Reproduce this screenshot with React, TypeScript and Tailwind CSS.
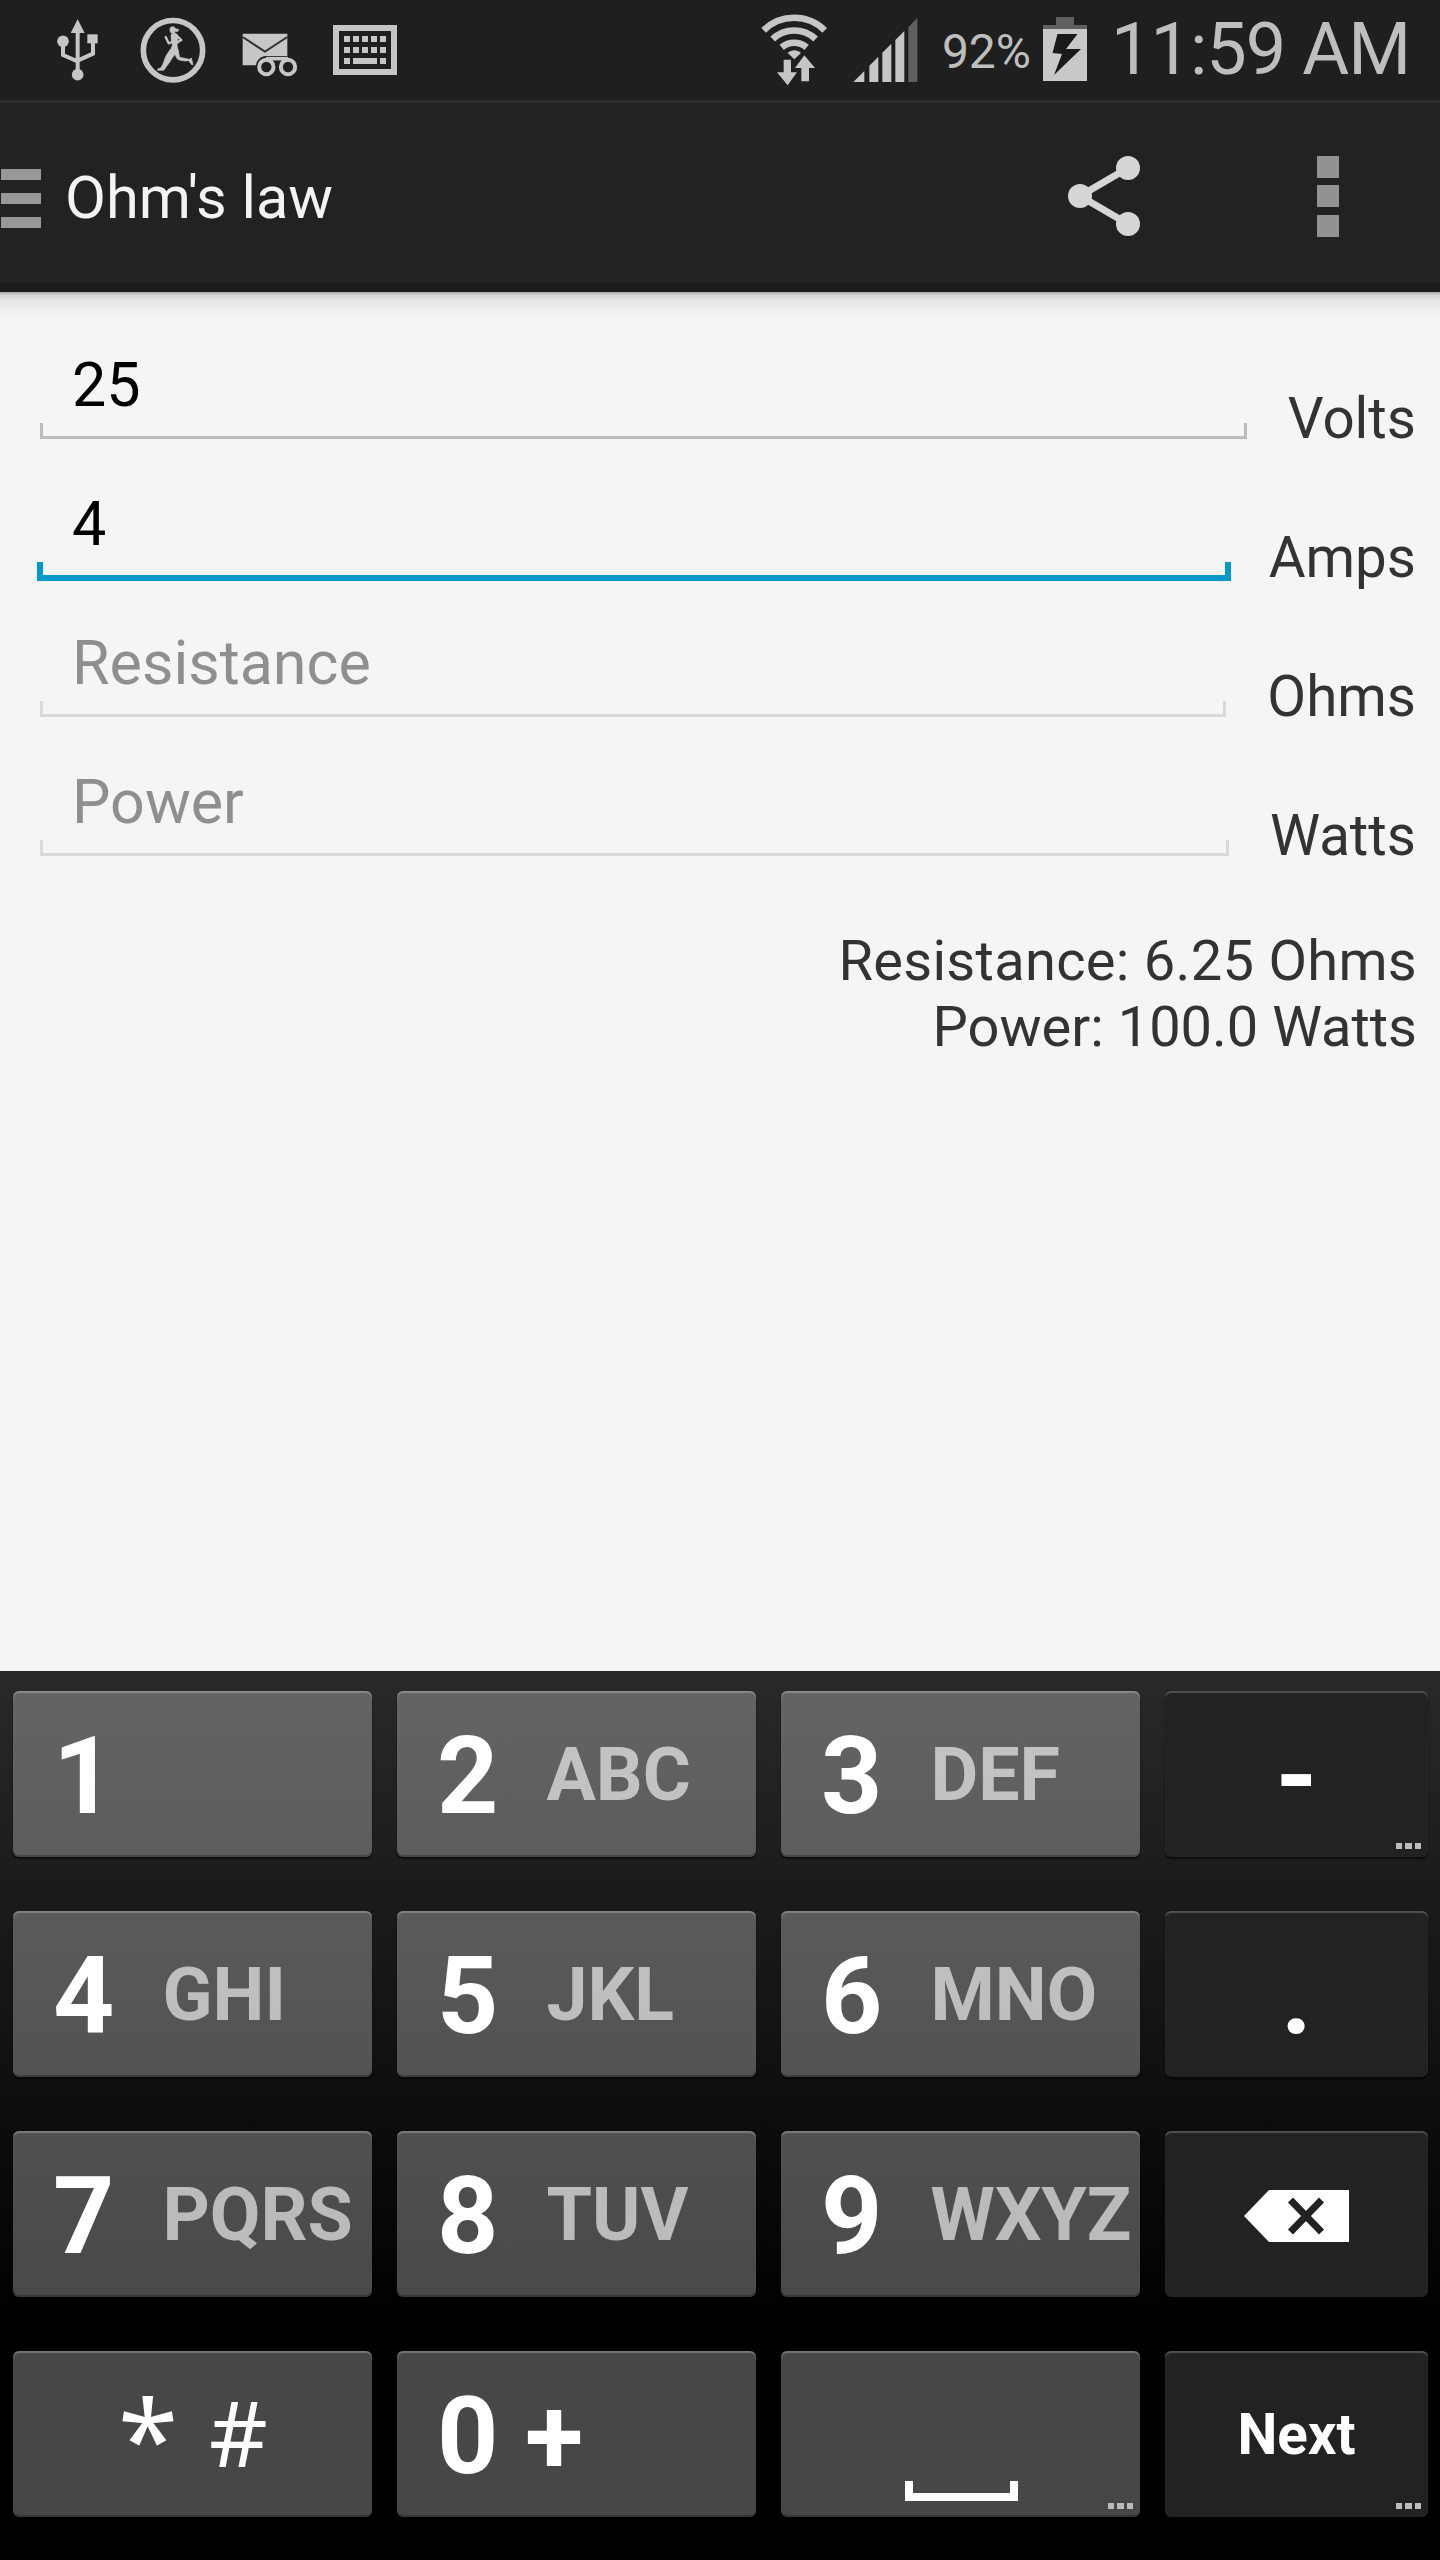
import { ReactNode } from "react";

type Field = {
  unit: string;
  value?: string;
  hint: string;
  focused?: boolean;
};

const FIELDS: Field[] = [
  { unit: "Volts", value: "25", hint: "Voltage" },
  { unit: "Amps", value: "4", hint: "Current", focused: true },
  { unit: "Ohms", hint: "Resistance" },
  { unit: "Watts", hint: "Power" },
];

function UsbIcon() {
  return (
    <svg className="w-[41px] h-[62px] shrink-0" viewBox="170 59 123 186" fill="#c6c6c6">
      <path d="M232 60l21 41h-42z" />
      <path d="M232 95v130M188 126v41l44 19M278 126v37l-46 21" fill="none" stroke="#c6c6c6" strokeWidth="12" />
      <circle cx="188" cy="126" r="17.500" />
      <circle cx="232" cy="226" r="17.500" />
      <path d="M261 105h31v27h-31z" />
    </svg>
  );
}

function RunnerIcon() {
  return (
    <svg className="w-[66px] h-[66px] shrink-0" viewBox="61 50 198 198" fill="#c6c6c6">
      <circle cx="160" cy="149.500" r="89" fill="none" stroke="#c6c6c6" strokeWidth="17" />
      <g stroke="#c6c6c6" strokeWidth="2" strokeLinejoin="round">
        <path d="M151 84c3-6 14-7 17 2l9 1-3 7-7-2c0 5-4 8-9 7-5 0-8-5-7-15z" />
        <path d="M155 102c5-4 14-4 18 1 3 12 1 24-1 32l4 18-8 8-10-3-5-8 5-16c-3-12-5-22-3-32z" />
        <path d="M152 147l18 6c-6 13-13 20-19 31l-16 22-3 4h-18l-1-3 11-5c7-10 10-25 16-37z" />
        <path d="M163 153l12-4c3 8 3 16 5 22l29 6 6-4 5 20h-4l-9-12c-12 2-23 0-33-4-6-8-9-14-11-24z" />
      </g>
      <path d="M157 125l-10 4-9-19M170 105l15 14-15 9" fill="none" stroke="#c6c6c6" strokeWidth="7" strokeLinejoin="round" strokeLinecap="round" />
    </svg>
  );
}

function VoicemailIcon() {
  return (
    <svg className="w-[56px] h-[44px] shrink-0" viewBox="368 98 168 132">
      <path d="M370 100h134v67h-64c-18 2-28 12-30 28h-40z" fill="#c6c6c6" />
      <path d="M370 110l67 44 67-44" fill="none" stroke="#303030" strokeWidth="6" />
      <path d="M440 175h66" stroke="#c6c6c6" strokeWidth="11" />
      <circle cx="441" cy="200" r="21.500" fill="#1f1f1f" stroke="#c6c6c6" strokeWidth="12" />
      <circle cx="506" cy="200" r="21.500" fill="#1f1f1f" stroke="#c6c6c6" strokeWidth="12" />
    </svg>
  );
}

function KeyboardIcon() {
  return (
    <svg className="w-[64px] h-[50px] shrink-0" viewBox="0 0 64 50" fill="#c6c6c6">
      <path d="M3 3h58v44H3z" fill="none" stroke="#c6c6c6" strokeWidth="6" />
      {[11, 20, 29, 38, 47].map((x) => (
        <g key={x}>
          <rect x={x} y="11" width="6" height="6" />
          <rect x={x} y="22" width="6" height="6" />
        </g>
      ))}
      <path d="M11 33h6v6h-6zM20 33h24v6H20zM47 33h6v6h-6z" />
    </svg>
  );
}

function WifiIcon() {
  return (
    <svg className="w-[66px] h-[72px] shrink-0" viewBox="63 41 198 216" fill="#c6c6c6">
      <g fill="none" stroke="#c6c6c6" strokeWidth="20">
        <path d="M71 90a130 130 0 0 1 183 0" />
        <path d="M98 116a94 94 0 0 1 129 0" />
        <path d="M125 141a58 58 0 0 1 75 0" />
      </g>
      <path d="M143 158c12-11 28-11 40 0l-20 19z" />
      <path d="M131 178h22v38h18l-28 39-32-39h20z" />
      <path d="M193 165l32 38h-18v40h-23v-40h-19z" />
    </svg>
  );
}

function SignalIcon() {
  return (
    <svg className="w-[65px] h-[64px] shrink-0" viewBox="338 54 195 192" fill="#c6c6c6">
      <path d="M339 246l33-33v33zM387 246v-49l27-27v76zM426 246v-88l27-27v115zM465 246V120l27-27v153z" />
      <path d="M504 246V81l27-27v192z" fill="#606060" />
    </svg>
  );
}

function BatteryIcon() {
  return (
    <svg className="w-[44px] h-[64px] shrink-0" viewBox="0 0 44 64">
      <path d="M13 0h18v8h13v4H0V8h13z" fill="#606060" />
      <path d="M0 12h44v52H0z" fill="#c8c8c8" />
      <path d="M14.500 17h20L23 32h15L11 58l8-21-9.500-1z" fill="#1a1a1a" />
    </svg>
  );
}

function StatusBar() {
  return (
    <div className="flex items-center h-[100px] bg-[#1f1f1f] pl-[57px] pr-8 text-[#bebebe]">
      <UsbIcon />
      <div className="ml-[42px] flex"><RunnerIcon /></div>
      <div className="ml-[36px] mt-[9px] flex"><VoicemailIcon /></div>
      <div className="ml-[35px] flex"><KeyboardIcon /></div>
      <div className="ml-auto flex items-center">
        <WifiIcon />
        <div className="ml-[26px] flex"><SignalIcon /></div>
        <span className="ml-[24px] pt-[3px] text-[48px] leading-none">92%</span>
        <div className="ml-[12px] -mt-[2px] flex"><BatteryIcon /></div>
        <span className="ml-[24px] w-[297px] whitespace-nowrap text-[72px] leading-none tracking-[-1px]">11:59 AM</span>
      </div>
    </div>
  );
}

function ActionBar() {
  return (
    <div className="flex items-center h-[192px] bg-[#222222] border-t-[3px] border-b-[9px] border-t-[#2b2b2b] border-b-[#1b1b1b] pt-[6px] pl-px pr-[101px]">
      <div className="flex flex-col gap-[13px] mt-[5px]">
        <div className="w-[40px] h-[11px] bg-[#989898]" />
        <div className="w-[40px] h-[11px] bg-[#989898]" />
        <div className="w-[40px] h-[11px] bg-[#989898]" />
      </div>
      <h1 className="ml-[24px] mt-[6px] text-[59.500px] leading-none text-[#f3f3f3]">Ohm's law</h1>
      <svg className="ml-auto w-[72px] h-[80px]" viewBox="0 0 72 80" fill="#d6d6d6">
        <path d="M60 12L12 40l48 28" fill="none" stroke="#d6d6d6" strokeWidth="7" />
        <circle cx="12" cy="40" r="12" />
        <circle cx="60" cy="12" r="12" />
        <circle cx="60" cy="68" r="12" />
      </svg>
      <div className="ml-[177px] flex flex-col gap-[7.500px]">
        <div className="w-[22px] h-[22px] bg-[#929292]" />
        <div className="w-[22px] h-[22px] bg-[#929292]" />
        <div className="w-[22px] h-[22px] bg-[#929292]" />
      </div>
    </div>
  );
}

function FieldRow({ field }: { field: Field }) {
  let line = "h-[16px] border-x-3 border-b-3 border-[#d9d9d9]";
  if (field.value) line = "h-[16px] border-x-3 border-b-3 border-[#bcbcbc]";
  if (field.focused) line = "h-[19px] -mx-[3px] -mb-[3px] border-x-[6px] border-b-[6px] border-[#0099cc]";

  return (
    <div className="flex items-end h-[139px] pl-[40px] pr-6 gap-[41px]">
      <div className="flex-1 mb-[8px]">
        <p className={`pl-[32px] mb-[7px] text-[61px] leading-none ${field.value ? "text-black" : "text-[#8f8f8f]"}`}>
          {field.value ?? field.hint}
        </p>
        <div className={line} />
      </div>
      <span className="text-[56.500px] leading-none text-[#333333]">{field.unit}</span>
    </div>
  );
}

function MoreDots() {
  return (
    <span className="absolute right-[7px] bottom-[8px] flex gap-[3px]">
      <span className="w-[6.500px] h-[6px] bg-[#bbbbbb]" />
      <span className="w-[6.500px] h-[6px] bg-[#bbbbbb]" />
      <span className="w-[6.500px] h-[6px] bg-[#bbbbbb]" />
    </span>
  );
}

function Key({ children, dark, more }: { children?: ReactNode; dark?: boolean; more?: boolean }) {
  return (
    <button
      className={`relative flex h-[166px] rounded-[6px] font-bold text-white ${
        dark
          ? "items-center justify-center bg-[#222222] shadow-[inset_0_2px_1px_#505050,0_2px_2px_rgba(0,0,0,0.6)]"
          : "items-center bg-white/28 shadow-[inset_0_2px_1px_rgba(255,255,255,0.25),inset_0_-2px_1px_rgba(0,0,0,0.25),0_2px_2px_rgba(0,0,0,0.6)]"
      }`}
    >
      {children}
      {more && <MoreDots />}
    </button>
  );
}

function NumberKey({ digit, letters }: { digit: string; letters?: string }) {
  return (
    <Key>
      <span className="ml-[40px] pt-[5px] text-[107px] leading-none whitespace-pre">{digit}</span>
      {letters && (
        <span className="ml-[48px] pt-[3px] text-[73.500px] leading-none text-white/62">{letters}</span>
      )}
    </Key>
  );
}

function Keypad() {
  return (
    <div className="h-[889px] bg-[linear-gradient(#292929,#000000_73.800%)] pt-5 pl-[13px] pr-3">
      <div className="grid grid-cols-[359px_359px_359px_263px] gap-x-[25px] gap-y-[54px]">
        <NumberKey digit="1" />
        <NumberKey digit="2" letters="ABC" />
        <NumberKey digit="3" letters="DEF" />
        <Key dark more>
          <span className="pt-[5px] text-[107px] leading-none">-</span>
        </Key>

        <NumberKey digit="4" letters="GHI" />
        <NumberKey digit="5" letters="JKL" />
        <NumberKey digit="6" letters="MNO" />
        <Key dark>
          <span className="pt-[5px] text-[107px] leading-none">.</span>
        </Key>

        <NumberKey digit="7" letters="PQRS" />
        <NumberKey digit="8" letters="TUV" />
        <NumberKey digit="9" letters="WXYZ" />
        <Key dark>
          <svg className="w-[105px] h-[52px] mt-[4px] mr-[1px]" viewBox="0 0 105 52">
            <path d="M0 26L25 0h80v52H25z" fill="#ffffff" />
            <path d="M46.500 10l31 32M77.500 10l-31 32" stroke="#222222" strokeWidth="7" />
          </svg>
        </Key>

        <Key>
          <span className="flex items-start h-full pl-[105px] font-['Noto_Sans'] font-normal">
            <span className="pt-[32px] text-[109px] leading-none">*</span>
            <span className="ml-[31px] pt-[36px] text-[91px] leading-none">#</span>
          </span>
        </Key>
        <NumberKey digit="0 +" />
        <Key more>
          <span className="ml-[124px] mt-[114px] w-[113px] h-[20px] border-x-[8px] border-b-[8px] border-white" />
        </Key>
        <Key dark more>
          <span className="pt-[2px] text-[56.500px] leading-none">Next</span>
        </Key>
      </div>
    </div>
  );
}

export default function App() {
  return (
    <div className="flex flex-col w-[1440px] h-[2560px] overflow-hidden bg-[#f5f5f5] font-['Roboto',sans-serif]">
      <StatusBar />
      <ActionBar />
      <main className="flex-1 pt-[16px] bg-[linear-gradient(#a8a8a8,#d2d2d2_3px,#e6e6e6_9px,#f1f1f1_20px,#f5f5f5_32px)]">
        {FIELDS.map((field) => (
          <FieldRow key={field.unit} field={field} />
        ))}
        <div className="mt-[64px] pr-[23px] text-right text-[56px] leading-[66px] text-[#333333]">
          <p className="tracking-[0.300px]">Resistance: 6.25 Ohms</p>
          <p>Power: 100.0 Watts</p>
        </div>
      </main>
      <Keypad />
    </div>
  );
}
